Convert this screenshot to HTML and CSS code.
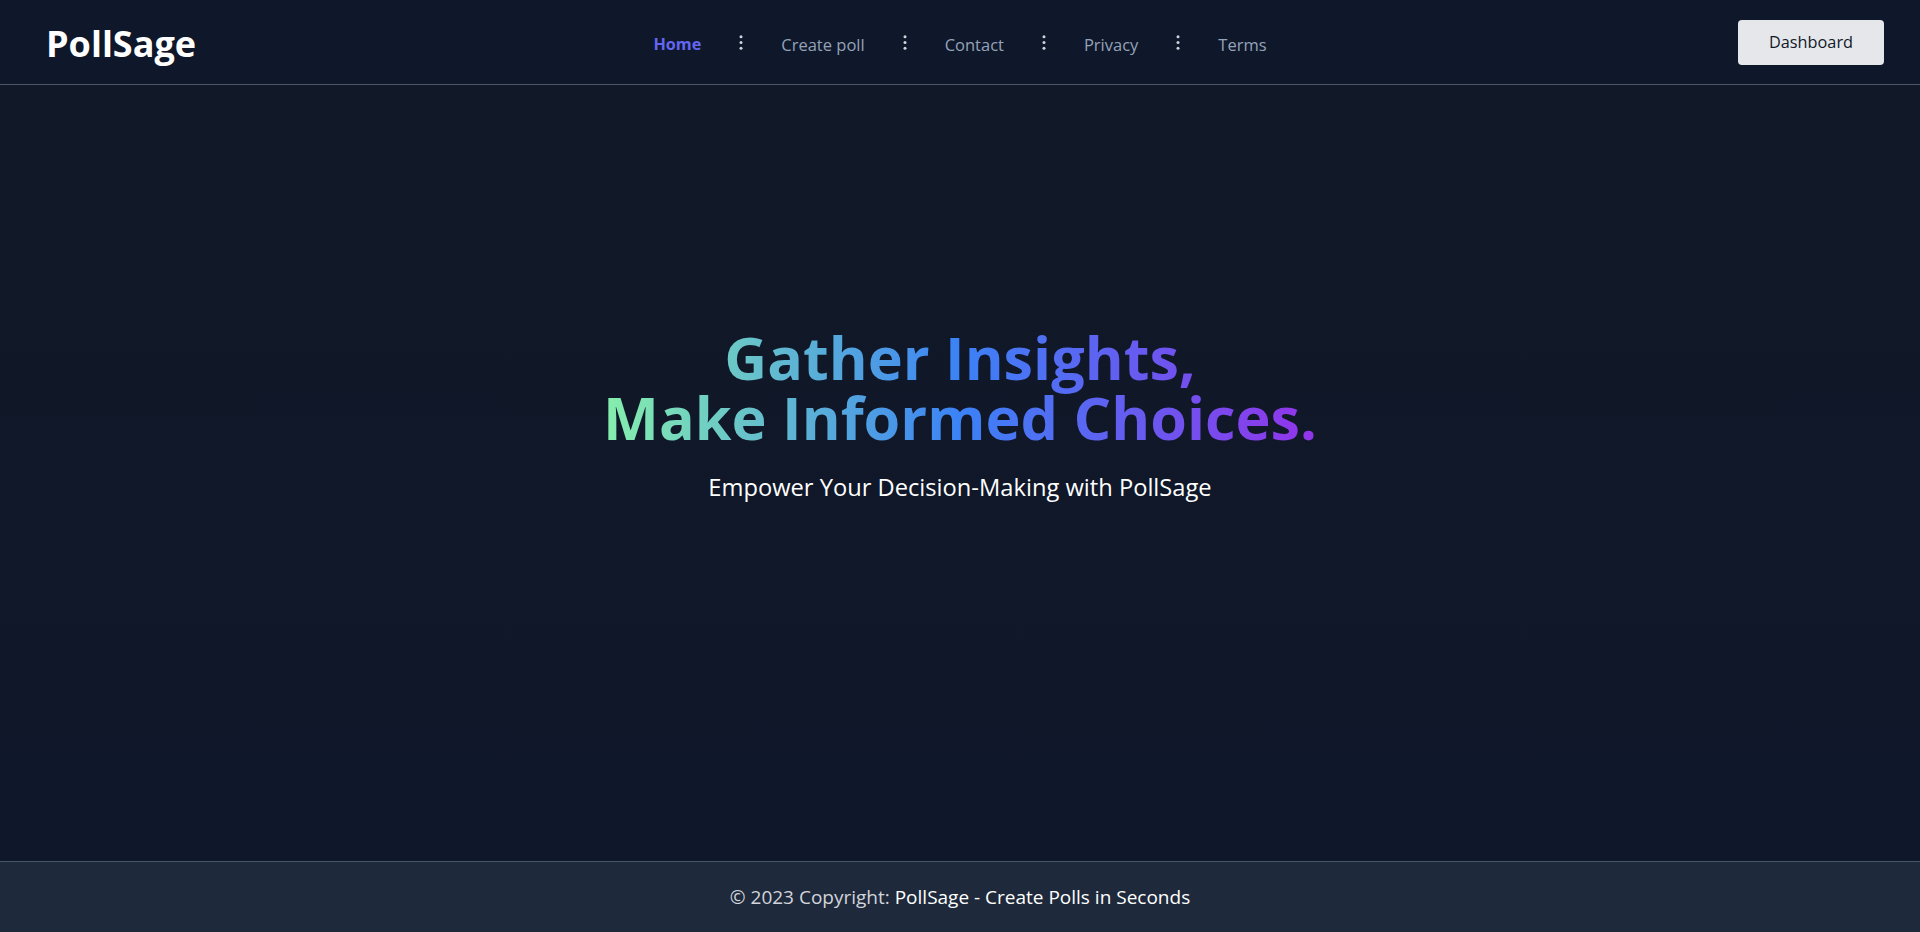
FILE: index.html
```html
<!DOCTYPE html>
<html lang="en">
<head>
<meta charset="utf-8">
<title>PollSage</title>
<link rel="stylesheet" href="styles.css">
</head>
<body>
<div class="page">
  <header class="topbar">
    <a class="logo" href="#">PollSage</a>
    <nav class="nav">
      <a class="nav-link active" href="#">Home</a>
      <svg class="sep" width="4" height="15" viewBox="0 0 4 15"><circle cx="2" cy="1.75" r="1.5"/><circle cx="2" cy="7.5" r="1.5"/><circle cx="2" cy="13.25" r="1.5"/></svg>
      <a class="nav-link" href="#">Create poll</a>
      <svg class="sep" width="4" height="15" viewBox="0 0 4 15"><circle cx="2" cy="1.75" r="1.5"/><circle cx="2" cy="7.5" r="1.5"/><circle cx="2" cy="13.25" r="1.5"/></svg>
      <a class="nav-link" href="#">Contact</a>
      <svg class="sep" width="4" height="15" viewBox="0 0 4 15"><circle cx="2" cy="1.75" r="1.5"/><circle cx="2" cy="7.5" r="1.5"/><circle cx="2" cy="13.25" r="1.5"/></svg>
      <a class="nav-link" href="#">Privacy</a>
      <svg class="sep" width="4" height="15" viewBox="0 0 4 15"><circle cx="2" cy="1.75" r="1.5"/><circle cx="2" cy="7.5" r="1.5"/><circle cx="2" cy="13.25" r="1.5"/></svg>
      <a class="nav-link" href="#">Terms</a>
    </nav>
    <div class="actions">
      <button class="btn">Dashboard</button>
    </div>
  </header>
  <main class="hero">
    <h1 class="hero-title"><span class="hero-line">Gather Insights,</span><span class="hero-line">Make Informed Choices.</span></h1>
    <p class="hero-sub">Empower Your Decision-Making with PollSage</p>
  </main>
  <footer class="footer">
    <p>© 2023 Copyright: <a href="#">PollSage - Create Polls in Seconds</a></p>
  </footer>
</div>
</body>
</html>
```

FILE: styles.css
```css
* { box-sizing: border-box; }
html, body { margin: 0; padding: 0; }
body {
  background: #111827;
  color: #fff;
  font-family: "Open Sans", "Noto Sans", sans-serif;
}
a { text-decoration: none; color: inherit; }
.page {
  min-height: 100vh;
  display: flex;
  flex-direction: column;
}
.topbar {
  height: 85px;
  background: #0f172a;
  border-bottom: 1px solid #4b5563;
  display: grid;
  grid-template-columns: 1fr auto 1fr;
  align-items: center;
  padding: 0 41px;
}
.logo {
  justify-self: start;
  margin: 2px 0 0 5px;
  font-size: 36px;
  font-weight: 700;
  color: #fff;
}
.nav {
  display: flex;
  align-items: center;
  gap: 38px;
  margin-top: 4px;
}
.nav-link {
  font-size: 16.5px;
  color: #94a3b8;
}
.nav-link.active {
  color: #6366f1;
  font-weight: 700;
  font-size: 16.2px;
}
.sep { fill: #d1d5db; margin-top: -3px; }
.actions {
  display: flex;
  justify-content: flex-end;
  margin-right: -5px;
}
.btn {
  width: 146px;
  height: 45px;
  background: #e5e7eb;
  color: #111827;
  border: 0;
  border-radius: 4px;
  font-family: inherit;
  font-size: 16.3px;
}
.hero {
  flex: 1;
  display: flex;
  flex-direction: column;
  align-items: center;
  justify-content: center;
  padding-bottom: 117px;
  background: linear-gradient(#111827, #0f172a);
}
.hero-title {
  margin: 0;
  font-size: 59.3px;
  line-height: 60px;
  font-weight: 700;
  text-align: center;
  background: linear-gradient(to right, #86efac, #3b82f6, #9333ea);
  -webkit-background-clip: text;
  background-clip: text;
  color: transparent;
}
.hero-line { display: block; }
.hero-sub {
  margin: 24px 0 0;
  font-size: 23.7px;
  line-height: 32px;
  color: #fff;
}
.footer {
  height: 71px;
  background: #1e293b;
  border-top: 1px solid #475569;
  display: flex;
  align-items: center;
  justify-content: center;
}
.footer p {
  margin: 0;
  font-size: 19px;
  color: #d1d5db;
}
.footer a { color: #fff; }
```
